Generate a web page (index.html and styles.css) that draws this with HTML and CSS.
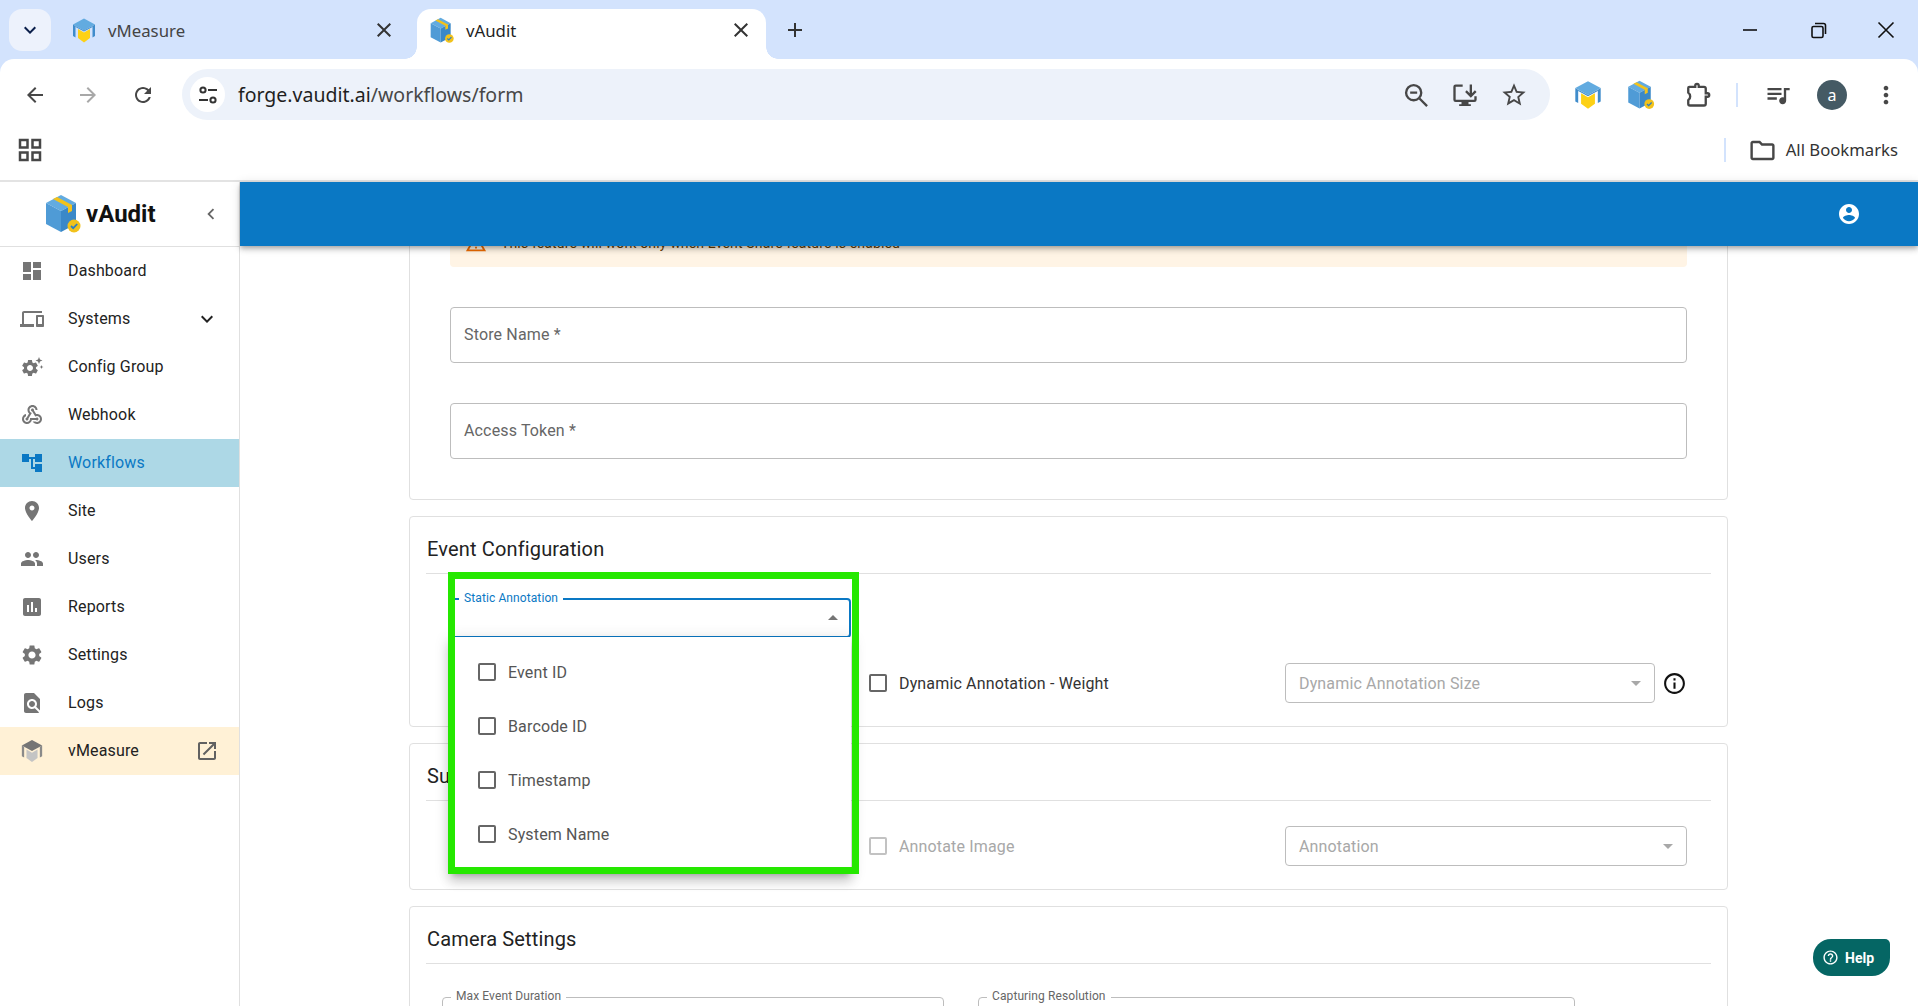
FILE: index.html
```html
<!DOCTYPE html>
<html lang="en">
<head>
<meta charset="utf-8">
<title>vAudit</title>
<link rel="stylesheet" href="styles.css">
</head>
<body>
<svg class="defs" width="0" height="0" aria-hidden="true">
  <defs>
    <symbol id="cube" viewBox="0 0 36 40">
      <path d="M16 1 31 9 16 17 1 9z" fill="#62abe0"/>
      <path d="M1 9 16 17V38L1 30z" fill="#4f9bd6"/>
      <path d="M16 17 31 9V30L16 38z" fill="#3a88c8"/>
      <path d="M8 5 12 3 27 11V17L23 19V13z" fill="#f2c21b"/>
      <circle cx="29" cy="32" r="6.5" fill="#f2c21b"/>
      <path d="M26 32l2.2 2.2 4-4.2" fill="none" stroke="#2f7fc1" stroke-width="1.8"/>
    </symbol>
    <symbol id="cap" viewBox="0 0 24 26">
      <path d="M12 1 23 7 12 13 1 7z" fill="#62abe0"/>
      <path d="M1 7 3.5 8.4V20L1 18.6z" fill="#3f8ccb"/>
      <path d="M23 7 20.5 8.4V20L23 18.6z" fill="#3f8ccb"/>
      <path d="M3.5 8.4 12 13V14L3.5 9.5z" fill="#3f8ccb"/>
      <path d="M20.5 8.4 12 13V14L20.5 9.5z" fill="#3f8ccb"/>
      <path d="M6 11.5 12 15 18 11.5V20.5L12 25 6 20.5z" fill="#fdd116"/>
    </symbol>
    <symbol id="cap-grey" viewBox="0 0 24 26">
      <path d="M12 1 23 7 12 13 1 7z" fill="#757575"/>
      <path d="M1 7 3.5 8.4V20L1 18.6zM23 7 20.5 8.4V20L23 18.6z" fill="#8a8a8a"/>
      <path d="M6 11.5 12 15 18 11.5V20.5L12 25 6 20.5z" fill="#c4c4c4"/>
    </symbol>
    <symbol id="gear" viewBox="0 0 24 24">
      <path d="M19.14 12.94c.04-.3.06-.61.06-.94 0-.32-.02-.64-.07-.94l2.03-1.58c.18-.14.23-.41.12-.61l-1.92-3.32c-.12-.22-.37-.29-.59-.22l-2.39.96c-.5-.38-1.03-.7-1.62-.94l-.36-2.54c-.04-.24-.24-.41-.48-.41h-3.84c-.24 0-.43.17-.47.41l-.36 2.54c-.59.24-1.13.57-1.62.94l-2.39-.96c-.22-.08-.47 0-.59.22L2.74 8.87c-.12.21-.08.47.12.61l2.03 1.58c-.05.3-.09.63-.09.94s.02.64.07.94l-2.03 1.58c-.18.14-.23.41-.12.61l1.92 3.32c.12.22.37.29.59.22l2.39-.96c.5.38 1.03.7 1.62.94l.36 2.54c.05.24.24.41.48.41h3.84c.24 0 .44-.17.47-.41l.36-2.54c.59-.24 1.13-.56 1.62-.94l2.39.96c.22.08.47 0 .59-.22l1.92-3.32c.12-.22.07-.47-.12-.61l-2.01-1.58zM12 15.6c-1.98 0-3.6-1.62-3.6-3.6s1.62-3.6 3.6-3.6 3.6 1.62 3.6 3.6-1.62 3.6-3.6 3.6z"/>
    </symbol>
  </defs>
</svg>

<div class="page">
  <div class="tabstrip">
    <div class="tab-menu"><svg class="i24 navy" viewBox="0 0 24 24"><path d="M16.59 8.59L12 13.17 7.41 8.59 6 10l6 6 6-6z"/></svg></div>
    <div class="tab tab-first">
      <svg class="fav"><use href="#cap"/></svg>
      <span class="tab-title muted">vMeasure</span>
      <svg class="tab-x" viewBox="0 0 24 24"><path d="M19 6.41 17.59 5 12 10.59 6.41 5 5 6.41 10.59 12 5 17.59 6.41 19 12 13.41 17.59 19 19 17.59 13.41 12z"/></svg>
    </div>
    <div class="tab active">
      <svg class="fav"><use href="#cube"/></svg>
      <span class="tab-title">vAudit</span>
      <svg class="tab-x" viewBox="0 0 24 24"><path d="M19 6.41 17.59 5 12 10.59 6.41 5 5 6.41 10.59 12 5 17.59 6.41 19 12 13.41 17.59 19 19 17.59 13.41 12z"/></svg>
    </div>
    <svg class="new-tab" viewBox="0 0 24 24"><path d="M19 13h-6v6h-2v-6H5v-2h6V5h2v6h6v2z"/></svg>
    <div class="winctl">
      <svg viewBox="0 0 24 24"><path d="M5 11.2h14v1.6H5z"/></svg>
      <svg viewBox="0 0 24 24"><path d="M7.5 8.5h8a1.5 1.5 0 0 1 1.5 1.5v8a1.5 1.5 0 0 1-1.5 1.5h-8a1.5 1.5 0 0 1-1.5-1.5v-8a1.5 1.5 0 0 1 1.5-1.5zM9 5.5h8.5a2 2 0 0 1 2 2V16" fill="none" stroke="#111" stroke-width="1.6"/></svg>
      <svg viewBox="0 0 24 24"><path d="M4.5 4.5 19.5 19.5M19.5 4.5 4.5 19.5" fill="none" stroke="#111" stroke-width="1.6"/></svg>
    </div>
  </div>

  <div class="toolbar">
    <svg class="nav nav-back" viewBox="0 0 24 24"><path d="M20 11H7.83l5.59-5.59L12 4l-8 8 8 8 1.41-1.41L7.83 13H20v-2z"/></svg>
    <svg class="nav nav-fwd faded" viewBox="0 0 24 24"><path d="M12 4l-1.41 1.41L16.17 11H4v2h12.17l-5.58 5.59L12 20l8-8z"/></svg>
    <svg class="nav nav-reload" viewBox="0 0 24 24"><path d="M17.65 6.35C16.2 4.9 14.21 4 12 4c-4.42 0-7.99 3.58-7.99 8s3.57 8 7.99 8c3.73 0 6.84-2.55 7.73-6h-2.08c-.82 2.33-3.04 4-5.65 4-3.31 0-6-2.69-6-6s2.69-6 6-6c1.66 0 3.14.69 4.22 1.78L13 11h7V4l-2.35 2.35z"/></svg>
    <div class="omnibox">
      <span class="site-info">
        <svg viewBox="0 0 24 24" class="i24"><g fill="none" stroke="#333" stroke-width="2"><circle cx="7" cy="7" r="2.6"/><circle cx="17" cy="17" r="2.6"/><path d="M12 7h9M3 17h9"/></g></svg>
      </span>
      <span class="url"><span class="host">forge.vaudit.ai</span>/workflows/form</span>
      <span class="omni-actions">
        <svg class="big" viewBox="0 0 24 24"><g fill="none" stroke="#474747" stroke-width="2"><circle cx="10" cy="10" r="6.5"/><path d="M7 10h6M15 15l6.5 6.5"/></g></svg>
        <svg class="big" viewBox="0 0 24 24"><path d="M10 3H4a2 2 0 0 0-2 2v11a2 2 0 0 0 2 2h5v2H7v1.5h10V20h-2v-2h5a2 2 0 0 0 2-2v-3h-2v3H4V5h6zM16 3h2v7.5l2.5-2.5 1.4 1.4L17 14.3l-4.9-4.9L13.5 8l2.5 2.5z"/></svg>
        <svg class="big" viewBox="0 0 24 24"><path d="M22 9.24l-7.19-.62L12 2 9.19 8.63 2 9.24l5.46 4.73L5.82 21 12 17.27 18.18 21l-1.63-7.03L22 9.24zM12 15.4l-3.76 2.27 1-4.28-3.32-2.88 4.38-.38L12 6.1l1.71 4.04 4.38.38-3.32 2.88 1 4.28L12 15.4z"/></svg>
      </span>
    </div>
    <div class="ext">
      <svg class="ext-ico"><use href="#cap"/></svg>
      <svg class="ext-ico"><use href="#cube"/></svg>
      <svg class="big puzzle" viewBox="0 0 24 24"><path d="M5.5 5H10.500V4a1.500 1.500 0 0 1 3 0v1H18a1.500 1.500 0 0 1 1.500 1.500V10.500H21a1.500 1.500 0 0 1 0 3H19.500v6A1.500 1.500 0 0 1 18 21H6a1.500 1.500 0 0 1-1.500-1.500V16.500a4 4 0 0 0 0-6.500V6A1 1 0 0 1 5.500 5z"/></svg>
      <span class="vsep"></span>
      <svg class="big" viewBox="0 0 24 24"><path d="M15 6H3v2h12V6zm0 4H3v2h12v-2zM3 16h8v-2H3v2zM17 6v8.18c-.31-.11-.65-.18-1-.18-1.66 0-3 1.34-3 3s1.34 3 3 3 3-1.34 3-3V8h3V6h-5z"/></svg>
      <span class="avatar">a</span>
      <svg class="big" viewBox="0 0 24 24"><path d="M12 8c1.1 0 2-.9 2-2s-.9-2-2-2-2 .9-2 2 .9 2 2 2zm0 2c-1.1 0-2 .9-2 2s.9 2 2 2 2-.9 2-2-.9-2-2-2zm0 6c-1.1 0-2 .9-2 2s.9 2 2 2 2-.9 2-2-.9-2-2-2z"/></svg>
    </div>
  </div>

  <div class="bookmarks">
    <svg class="apps" viewBox="0 0 24 24"><path d="M3 3h8v8H3zM5 5v4h4V5zM13 3h8v8h-8zM15 5v4h4V5zM3 13h8v8H3zM5 15v4h4v-4zM13 13h8v8h-8zM15 15v4h4v-4z" fill-rule="evenodd"/></svg>
    <span class="bm-sep"></span>
    <svg class="folder" viewBox="0 0 24 24"><path d="M20 6h-8l-2-2H4c-1.1 0-1.99.9-1.99 2L2 18c0 1.1.9 2 2 2h16c1.1 0 2-.9 2-2V8c0-1.1-.9-2-2-2zm0 12H4V6h5.17l2 2H20v10z"/></svg>
    <span class="bm-label">All Bookmarks</span>
  </div>

  <div class="app">
    <aside class="sidebar">
      <div class="brand">
        <svg class="brand-logo"><use href="#cube"/></svg>
        <span class="brand-name">vAudit</span>
        <svg class="brand-back" viewBox="0 0 24 24"><path d="M15.41 7.41L14 6l-6 6 6 6 1.41-1.41L10.83 12z"/></svg>
      </div>
      <nav class="menu-list">
        <div class="nav-item"><svg class="nav-ico" viewBox="0 0 24 24"><path d="M3 13h8V3H3v10zm0 8h8v-6H3v6zm10 0h8V11h-8v10zm0-18v6h8V3h-8z"/></svg><span>Dashboard</span></div>
        <div class="nav-item"><svg class="nav-ico" viewBox="0 0 24 24"><path d="M4 6h18V4H4c-1.1 0-2 .9-2 2v11H0v3h14v-3H4V6zm19 2h-6c-.55 0-1 .45-1 1v10c0 .55.45 1 1 1h6c.55 0 1-.45 1-1V9c0-.55-.45-1-1-1zm-1 9h-4v-7h4v7z"/></svg><span>Systems</span><svg class="nav-end dark" viewBox="0 0 24 24"><path d="M16.59 8.59L12 13.17 7.41 8.59 6 10l6 6 6-6z"/></svg></div>
        <div class="nav-item"><svg class="nav-ico" viewBox="0 0 24 24"><use href="#gear" x="0" y="3" width="20" height="20"/><path d="M19 2l1 2.500L22.500 5.500 20 6.500 19 9l-1-2.500L15.500 5.500 18 4.500zM21.500 10l.6 1.400 1.400.6-1.400.6-.6 1.400-.6-1.400-1.400-.6 1.400-.6z"/></svg><span>Config Group</span></div>
        <div class="nav-item"><svg class="nav-ico" viewBox="0 0 24 24"><path d="M10 15l5.88 0c.27-.31.67-.5 1.12-.5.83 0 1.500.67 1.500 1.500s-.67 1.500-1.500 1.500c-.44 0-.84-.19-1.120-.5H11.900c-.46 2.280-2.480 4-4.900 4-2.760 0-5-2.240-5-5 0-2.420 1.720-4.440 4-4.900v2.070c-1.160.41-2 1.530-2 2.830 0 1.650 1.350 3 3 3s3-1.350 3-3v-1zm2.500-11c1.650 0 3 1.350 3 3h2c0-2.760-2.240-5-5-5s-5 2.240-5 5c0 1.430.6 2.710 1.550 3.620l-2.350 3.900c-.68.14-1.200.75-1.200 1.480 0 .83.67 1.500 1.500 1.500s1.500-.67 1.500-1.500c0-.16-.02-.31-.07-.45l3.380-5.630C10.490 9.610 9.500 8.420 9.500 7c0-1.650 1.350-3 3-3zm4.500 9c-.64 0-1.230.2-1.720.54l-3.050-5.070C11.530 8.350 11 7.740 11 7c0-.83.67-1.500 1.500-1.500S14 6.170 14 7c0 .15-.02.29-.06.43l2.190 3.650c.28-.05.57-.08.87-.08 2.760 0 5 2.240 5 5s-2.240 5-5 5c-1.850 0-3.470-1.010-4.330-2.500h2.670c.48.32 1.050.5 1.660.5 1.650 0 3-1.350 3-3s-1.350-3-3-3z"/></svg><span>Webhook</span></div>
        <div class="nav-item selected"><svg class="nav-ico" viewBox="0 0 24 24"><path d="M22 11V3h-7v3H9V3H2v8h7V8h2v10h4v3h7v-8h-7v3h-2V8h2v3z"/></svg><span>Workflows</span></div>
        <div class="nav-item"><svg class="nav-ico" viewBox="0 0 24 24"><path d="M12 2C8.13 2 5 5.13 5 9c0 5.25 7 13 7 13s7-7.75 7-13c0-3.87-3.13-7-7-7zm0 9.500c-1.380 0-2.500-1.120-2.500-2.500s1.120-2.500 2.500-2.500 2.500 1.120 2.500 2.500-1.120 2.500-2.500 2.500z"/></svg><span>Site</span></div>
        <div class="nav-item"><svg class="nav-ico" viewBox="0 0 24 24"><path d="M16 11c1.66 0 2.99-1.340 2.99-3S17.66 5 16 5c-1.66 0-3 1.340-3 3s1.340 3 3 3zm-8 0c1.66 0 2.99-1.340 2.99-3S9.66 5 8 5C6.340 5 5 6.340 5 8s1.340 3 3 3zm0 2c-2.330 0-7 1.170-7 3.500V19h14v-2.500c0-2.330-4.670-3.500-7-3.500zm8 0c-.29 0-.62.02-.97.05 1.160.84 1.970 1.970 1.970 3.450V19h6v-2.500c0-2.330-4.670-3.500-7-3.500z"/></svg><span>Users</span></div>
        <div class="nav-item"><svg class="nav-ico" viewBox="0 0 24 24"><path d="M19 3H5c-1.100 0-2 .9-2 2v14c0 1.100.9 2 2 2h14c1.100 0 2-.9 2-2V5c0-1.100-.9-2-2-2zM9 17H7v-7h2v7zm4 0h-2V7h2v10zm4 0h-2v-4h2v4z"/></svg><span>Reports</span></div>
        <div class="nav-item"><svg class="nav-ico" viewBox="0 0 24 24"><use href="#gear"/></svg><span>Settings</span></div>
        <div class="nav-item"><svg class="nav-ico" viewBox="0 0 24 24"><path d="M20 19.59V8l-6-6H6c-1.100 0-1.990.9-1.990 2L4 20c0 1.100.89 2 1.990 2H18c.45 0 .85-.15 1.190-.4l-4.430-4.430c-.8.52-1.740.83-2.760.83-2.760 0-5-2.240-5-5s2.240-5 5-5 5 2.240 5 5c0 1.020-.31 1.960-.83 2.750L20 19.590zM9 13c0 1.660 1.340 3 3 3s3-1.340 3-3-1.340-3-3-3-3 1.340-3 3z"/></svg><span>Logs</span></div>
        <div class="nav-item promo"><svg class="nav-ico"><use href="#cap-grey"/></svg><span>vMeasure</span><svg class="nav-end" viewBox="0 0 24 24"><path d="M19 19H5V5h7V3H5c-1.110 0-2 .9-2 2v14c0 1.100.89 2 2 2h14c1.100 0 2-.9 2-2v-7h-2v7zM14 3v2h3.590l-9.830 9.830 1.410 1.410L19 6.410V10h2V3h-7z"/></svg></div>
      </nav>
    </aside>

    <div class="workspace">
      <header class="topbar">
        <svg class="account" viewBox="0 0 24 24"><path d="M12 2C6.480 2 2 6.480 2 12s4.480 10 10 10 10-4.480 10-10S17.520 2 12 2zm0 3c1.660 0 3 1.340 3 3s-1.340 3-3 3-3-1.340-3-3 1.340-3 3-3zm0 14.200c-2.500 0-4.710-1.280-6-3.220.03-1.990 4-3.080 6-3.080 1.990 0 5.970 1.090 6 3.080-1.290 1.940-3.500 3.220-6 3.220z"/></svg>
      </header>
      <main class="content">
        <section class="card card-store">
          <div class="alert">
            <svg class="alert-ico" viewBox="0 0 24 24"><path d="M12 5.990L19.530 19H4.470L12 5.990M12 2L1 21h22L12 2zm1 14h-2v2h2v-2zm0-6h-2v4h2v-4z"/></svg>
            <span>This feature will work only when Event Share feature is enabled</span>
          </div>
          <div class="field"><span>Store Name *</span></div>
          <div class="field"><span>Access Token *</span></div>
        </section>

        <section class="card">
          <h2 class="card-title">Event Configuration</h2>
          <div class="body-event">
            <div class="static-select">
              <span class="float-label focus">Static Annotation</span>
              <svg class="caret" viewBox="0 0 24 24"><path d="M7 14l5-5 5 5z"/></svg>
              <div class="dropdown">
                <label class="opt"><span class="box"></span><span>Event ID</span></label>
                <label class="opt"><span class="box"></span><span>Barcode ID</span></label>
                <label class="opt"><span class="box"></span><span>Timestamp</span></label>
                <label class="opt"><span class="box"></span><span>System Name</span></label>
              </div>
              <div class="highlight"></div>
            </div>
            <div class="row row-dynamic">
              <span class="box"></span>
              <span class="row-label">Dynamic Annotation - Weight</span>
              <div class="select sel-dyn"><span>Dynamic Annotation Size</span><svg class="caret" viewBox="0 0 24 24"><path d="M7 10l5 5 5-5z"/></svg></div>
              <svg class="info" viewBox="0 0 24 24"><path d="M11 7h2v2h-2zm0 4h2v6h-2zm1-9C6.480 2 2 6.480 2 12s4.480 10 10 10 10-4.480 10-10S17.520 2 12 2zm0 18c-4.410 0-8-3.590-8-8s3.590-8 8-8 8 3.590 8 8-3.590 8-8 8z"/></svg>
            </div>
          </div>
        </section>

        <section class="card">
          <h2 class="card-title">Summary</h2>
          <div class="body-summary">
            <div class="row">
              <span class="box disabled"></span>
              <span class="row-label disabled-text">Annotate Image</span>
              <div class="select sel-ann"><span>Annotation</span><svg class="caret" viewBox="0 0 24 24"><path d="M7 10l5 5 5-5z"/></svg></div>
            </div>
          </div>
        </section>

        <section class="card">
          <h2 class="card-title">Camera Settings</h2>
          <div class="body-camera">
            <div class="outlined w-duration"><span class="float-label">Max Event Duration</span></div>
            <div class="outlined w-res"><span class="float-label">Capturing Resolution</span></div>
          </div>
        </section>
      </main>
      <button class="help" type="button">
        <svg viewBox="0 0 24 24"><path d="M11 18h2v-2h-2v2zm1-16C6.480 2 2 6.480 2 12s4.480 10 10 10 10-4.480 10-10S17.520 2 12 2zm0 18c-4.410 0-8-3.590-8-8s3.590-8 8-8 8 3.590 8 8-3.590 8-8 8zm0-14c-2.210 0-4 1.790-4 4h2c0-1.100.9-2 2-2s2 .9 2 2c0 2-3 1.750-3 5h2c0-2.250 3-2.500 3-5 0-2.210-1.790-4-4-4z"/></svg>
        <span>Help</span>
      </button>
    </div>
  </div>
</div>
</body>
</html>
```

FILE: styles.css
```css
* { box-sizing: border-box; }
html, body { margin: 0; height: 100%; overflow: hidden; }
body { font-family: Roboto, "Liberation Sans", sans-serif; background: #fff; color: #222; }
.defs { position: absolute; }
.page { height: 1006px; display: flex; flex-direction: column; overflow: hidden; background: #d3e3fd; }

/* browser chrome */
.tabstrip { height: 59px; flex: none; background: #d3e3fd; display: flex; align-items: flex-end; position: relative; font-family: "Noto Sans", sans-serif; }
.tab-menu { width: 42px; height: 42px; margin: 0 0 8px 9px; background: #edf2fc; border-radius: 13px; display: flex; align-items: center; justify-content: center; }
.i24 { width: 24px; height: 24px; }
.navy { fill: #0b1f4b; }
.tab { height: 50px; width: 349px; display: flex; align-items: center; padding: 0 13px 8px 13px; position: relative; }
.tab-first { width: 366px; padding-left: 21px; padding-right: 21px; }
.tab.active { background: #fff; border-radius: 14px 14px 0 0; }
.tab.active::before, .tab.active::after { content: ""; position: absolute; bottom: 0; width: 12px; height: 12px; }
.tab.active::before { left: -12px; background: radial-gradient(circle at 0 0, transparent 11.5px, #fff 12px); }
.tab.active::after { right: -12px; background: radial-gradient(circle at 100% 0, transparent 11.5px, #fff 12px); }
.fav { width: 24px; height: 27px; flex: none; }
.tab-title { font-size: 16.8px; margin-left: 12px; flex: 1; color: #1f1f1f; }
.tab-title.muted { color: #444; }
.tab-x { width: 24px; height: 24px; fill: #333; flex: none; }
.new-tab { width: 24px; height: 24px; fill: #333; margin: 0 0 17px 17px; }
.winctl { margin-left: auto; display: flex; gap: 44px; padding-right: 20px; margin-bottom: 17px; }
.winctl svg { width: 24px; height: 24px; fill: #111; }

.toolbar { height: 61px; flex: none; background: #fff; border-radius: 14px 14px 0 0; display: flex; align-items: flex-start; padding: 10px 0 0 23px; font-family: "Noto Sans", sans-serif; }
.nav { width: 24px; height: 24px; fill: #474747; flex: none; margin-top: 14px; }
.nav-back { margin-right: 29px; }
.nav-fwd { margin-right: 31px; }
.nav-reload { margin-right: 27px; }
.faded { fill: #a8a8a8; }
.big { width: 28px; height: 28px; fill: #474747; flex: none; }
.omnibox { width: 1368px; height: 51px; flex: none; background: #edf2fa; border-radius: 26px; display: flex; align-items: center; padding: 0 22px 0 8px; }
.site-info { width: 35px; height: 35px; background: #fff; border-radius: 50%; display: flex; align-items: center; justify-content: center; flex: none; }
.url { font-size: 19.5px; margin-left: 13px; color: #474747; white-space: nowrap; }
.host { color: #1f1f1f; }
.omni-actions { margin-left: auto; display: flex; gap: 21px; }
.ext { display: flex; align-items: center; height: 51px; margin-left: 24px; gap: 25px; }
.ext-ico { width: 28px; height: 30px; flex: none; }
.puzzle { fill: none; stroke: #474747; stroke-width: 2; margin-left: 3px; }
.vsep { width: 2px; height: 24px; background: #d3e3fd; flex: none; margin-right: 1px; }
.avatar { width: 30px; height: 30px; border-radius: 50%; background: #455a64; color: #fff; font-size: 16px; display: flex; align-items: center; justify-content: center; flex: none; }

.bookmarks { height: 62px; flex: none; background: #fff; border-bottom: 2px solid #e3e3e3; display: flex; align-items: center; padding: 0 20px 0 15px; font-family: "Noto Sans", sans-serif; }
.apps { width: 30px; height: 30px; fill: #474747; flex: none; }
.bm-sep { width: 2px; height: 24px; background: #d3e3fd; flex: none; margin: 0 22px 0 auto; }
.folder { width: 29px; height: 29px; fill: #474747; flex: none; }
.bm-label { font-size: 16.7px; color: #333; margin: -2px 0 0 9px; white-space: nowrap; }

/* app */
.app { flex: 1; min-height: 0; display: flex; background: #fff; }
.sidebar { width: 240px; flex: none; border-right: 1px solid #e0e0e0; background: #fff; }
.brand { height: 65px; display: flex; align-items: center; border-bottom: 1px solid #e0e0e0; padding-left: 44px; }
.brand-logo { width: 38px; height: 40px; flex: none; }
.brand-name { font-size: 24px; font-weight: 700; color: #111; margin-left: 4px; flex: 1; }
.brand-back { width: 22px; height: 22px; fill: #666; margin-right: 17px; flex: none; }
.nav-item { height: 48px; display: flex; align-items: center; padding: 0 16px 0 20px; font-size: 16px; letter-spacing: .15px; color: #222; }
.nav-item > span { margin-top: -2px; }
.nav-ico { width: 24px; height: 24px; fill: #757575; flex: none; margin-right: 24px; }
.nav-end { width: 24px; height: 24px; margin-left: auto; margin-right: 4px; fill: #616161; flex: none; }
.nav-end.dark { fill: #222; }
.selected { background: #add8e6; color: #0a78c4; }
.selected .nav-ico { fill: #0a78c4; }
.promo { background: #fff1d6; }

.workspace { flex: 1; min-width: 0; display: flex; flex-direction: column; position: relative; }
.topbar { height: 64px; flex: none; background: #0a78c4; display: flex; align-items: center; justify-content: flex-end; padding-right: 57px; position: relative; z-index: 5; box-shadow: 0 2px 4px -1px rgba(0,0,0,.2), 0 4px 5px rgba(0,0,0,.14), 0 1px 10px rgba(0,0,0,.12); }
.account { width: 24px; height: 24px; fill: #fff; }
.content { flex: 1; min-height: 0; overflow: hidden; padding-left: 169px; }

.card { width: 1319px; border: 1px solid #e0e0e0; border-radius: 4px; background: #fff; margin-bottom: 16px; padding: 0 16px; }
.card-store { margin-top: -60px; padding: 32px 40px 40px 40px; }
.alert { height: 48px; background: #fff4e5; border-radius: 4px; display: flex; align-items: center; padding-left: 15px; font-size: 14px; letter-spacing: .15px; color: #663c00; }
.alert-ico { width: 22px; height: 22px; fill: #ef6c00; margin-right: 14px; flex: none; }
.field { height: 56px; margin-top: 40px; border: 1px solid #bdbdbd; border-radius: 4px; display: flex; align-items: center; padding: 0 0 2px 13px; font-size: 16px; letter-spacing: .15px; color: #666; }

.card-title { margin: 0; font-size: 20px; font-weight: 400; letter-spacing: .15px; line-height: 30px; padding: 17px 0 9px 1px; border-bottom: 1px solid #e0e0e0; color: #222; }
.body-event { padding: 24px 0 23px 24px; }
.body-summary { padding: 25px 0 23px; }
.body-camera { padding: 33px 0 0 16px; display: flex; gap: 34px; }

.row { display: flex; align-items: center; height: 40px; padding-left: 443px; }
.row-dynamic { margin-top: 25px; padding-left: 419px; }
.row-label { font-size: 16px; letter-spacing: .15px; color: #333; margin-left: 12px; width: 386px; flex: none; }
.box { width: 18px; height: 18px; border: 2px solid #666; border-radius: 2px; flex: none; display: block; }
.box.disabled { border-color: #c2c2c2; }
.row-label.disabled-text { color: #a8a8a8; }
.select { height: 40px; border: 1px solid #bdbdbd; border-radius: 4px; display: flex; align-items: center; justify-content: space-between; padding: 0 6px 0 13px; font-size: 16px; letter-spacing: .15px; color: #a8a8a8; flex: none; }
.sel-dyn { width: 370px; }
.sel-ann { width: 402px; }
.caret { width: 24px; height: 24px; fill: #a8a8a8; flex: none; }
.info { width: 25px; height: 25px; fill: #111; margin-left: 7px; flex: none; }

.static-select { position: relative; height: 40px; width: 401px; border: 2px solid #0a78c4; border-radius: 4px; z-index: 3; }
.float-label { position: absolute; left: 8px; top: -10px; padding: 0 5px; background: #fff; font-size: 12px; line-height: 16px; letter-spacing: .1px; color: #666; white-space: nowrap; }
.float-label.focus { left: 7px; color: #0a78c4; }
.static-select > .caret { position: absolute; right: 4px; top: 6px; fill: #757575; }
.dropdown { position: absolute; left: -2px; right: -2px; top: 37px; height: 236px; background: #fff; padding-top: 8px; box-shadow: 0 5px 5px -3px rgba(0,0,0,.2), 0 8px 10px 1px rgba(0,0,0,.14), 0 3px 14px 2px rgba(0,0,0,.12); }
.opt { height: 54px; display: flex; align-items: center; padding-left: 28px; font-size: 16px; letter-spacing: .15px; color: #555; gap: 12px; }
.highlight { position: absolute; left: -4px; top: -28px; width: 411px; height: 302px; border: 7px solid #25e800; z-index: 4; pointer-events: none; }

.outlined { height: 56px; border: 1px solid #bdbdbd; border-radius: 4px; position: relative; flex: none; }
.w-duration { width: 502px; }
.w-res { width: 597px; }

.help { position: absolute; right: 28px; bottom: 30px; width: 77px; height: 37px; background: #056664; color: #fff; border: 0; border-radius: 18px 5px 18px 18px; display: flex; align-items: center; padding: 0 0 0 9px; gap: 6px; font-family: Roboto, sans-serif; font-size: 14px; font-weight: 700; z-index: 6; }
.help svg { width: 17px; height: 17px; fill: #fff; flex: none; }
```
